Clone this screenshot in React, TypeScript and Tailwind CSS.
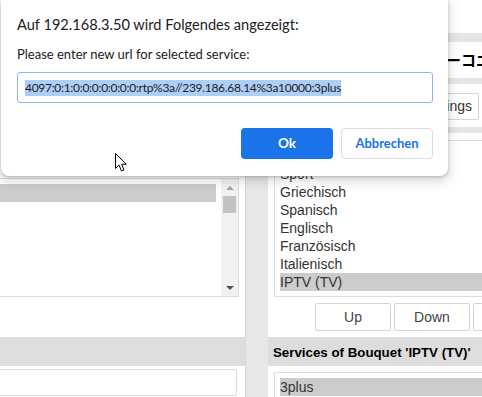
import React from "react";

const rightItems = ["Kinder", "Sport", "Griechisch", "Spanisch", "Englisch", "Französisch", "Italienisch", "IPTV (TV)"];

function Cursor() {
  return (
    <svg width="14" height="21" viewBox="0 0 14 21" className="absolute left-[114px] top-[152px]">
      <path
        d="M1.5 1.5 V16.5 L5 13 L7.5 19 L10 18 L7.6 12.2 H12.3 Z"
        fill="#ffffff"
        stroke="#000000"
        strokeWidth="1"
        strokeLinejoin="miter"
      />
    </svg>
  );
}

export default function App() {
  return (
    <div
      className="relative w-[482px] h-[397px] overflow-hidden bg-white"
      style={{ fontFamily: '"Liberation Sans", Arial, sans-serif' }}
    >
      {/* Page behind the dialog */}
      <div className="flex h-full w-[482px] items-stretch">
        {/* Left column */}
        <div className="w-[245px] shrink-0">
          <div className="h-[178px]" />
          <div className="flex h-[119px] w-[239px] border border-l-0 border-[#dcdcdc] bg-white">
            <div className="flex-1 pt-[5px] pr-[5px]">
              <div className="h-[18px] bg-[#cccccc]" />
            </div>
            <div className="flex w-[17px] flex-col bg-[#f1f1f1]">
              <div className="flex h-[17px] items-center justify-center">
                <div className="h-0 w-0 border-x-[4px] border-b-[4px] border-x-transparent border-b-[#a3a3a3]" />
              </div>
              <div className="mx-[2px] h-[17px] bg-[#c1c1c1]" />
              <div className="flex-1" />
              <div className="flex h-[17px] items-center justify-center">
                <div className="h-0 w-0 border-x-[4px] border-t-[4px] border-x-transparent border-t-[#505050]" />
              </div>
            </div>
          </div>
          <div className="h-[40px]" />
          <div className="h-[29px] bg-[#dddddd]" />
          <div className="h-[3px]" />
          <div className="h-[27px] w-[237px] rounded-[2px] border border-l-0 border-[#dcdcdc]" />
        </div>

        {/* Divider */}
        <div className="w-[23px] shrink-0 border-l border-[#d6d6d6] bg-[#e7e7e7]" />

        {/* Right column */}
        <div className="w-[214px] shrink-0">
          <div className="h-[33px]" />
          <div className="h-[9px] bg-[#e5e5e5]" />
          <div className="flex h-[36px] items-center pl-[178px]">
            <span
              className="whitespace-nowrap text-[15px] font-bold leading-[36px] text-black"
              style={{ fontFamily: '"Noto Sans CJK JP", sans-serif' }}
            >
              ーコエ
            </span>
          </div>
          <div className="h-[6px] bg-[#e5e5e5]" />
          <div className="flex h-[43px] items-start justify-end pt-[9px] pr-[3px]">
            <div className="flex h-[27px] items-center rounded-[2px] border border-[#d4d4d4] bg-white px-[6px] text-[14px] text-[#333333]">
              Settings
            </div>
          </div>
          <div className="h-[6px] bg-[#e5e5e5]" />
          <div className="h-[7px]" />
          <div className="ml-[6px] h-[157px] w-[208px] overflow-hidden rounded-l-[2px] border border-r-0 border-[#dcdcdc] pl-[5px] pt-[6px]">
            {rightItems.map((it) => (
              <div
                key={it}
                className={`h-[18px] whitespace-nowrap text-[14px] leading-[18px] text-[#333333] ${
                  it === "IPTV (TV)" ? "bg-[#cccccc]" : ""
                }`}
              >
                {it}
              </div>
            ))}
          </div>
          <div className="flex h-[40px] items-start gap-[3px] overflow-hidden pl-[47px] pt-[6px]">
            {["Up", "Down", "Del"].map((b) => (
              <div
                key={b}
                className="flex h-[28px] w-[76px] shrink-0 items-center justify-center rounded-[2px] border border-[#d4d4d4] bg-white text-[14px] text-[#444444]"
              >
                {b}
              </div>
            ))}
          </div>
          <div className="flex h-[29px] w-[214px] items-center bg-[#dddddd] pl-[5px] pt-[2px]">
            <span className="whitespace-nowrap text-[13.3px] font-bold text-black">Services of Bouquet 'IPTV (TV)'</span>
          </div>
          <div className="h-[6px]" />
          <div className="ml-[6px] h-[40px] w-[208px] border border-r-0 border-[#dcdcdc] pl-[5px] pt-[5px]">
            <div className="h-[18px] bg-[#cccccc] text-[14px] leading-[18px] text-[#333333]">3plus</div>
          </div>
        </div>
      </div>

      {/* Browser prompt dialog */}
      <div
        className="absolute left-[1px] top-0 flex h-[176px] w-[447px] flex-col rounded-b-[8px] bg-white pl-[16px] pr-[15px] shadow-[0_1px_3px_rgba(60,64,67,0.3),0_4px_8px_3px_rgba(60,64,67,0.15)]"
        style={{ fontFamily: 'Lato, "Noto Sans", sans-serif' }}
      >
        <div className="shrink-0 pt-[15px] text-[14.6px] leading-[20px] text-[#202124]">
          Auf 192.168.3.50 wird Folgendes angezeigt:
        </div>
        <div className="mt-[11px] shrink-0 text-[13px] leading-[16px] text-[#202124]">
          Please enter new url for selected service:
        </div>
        <div className="mt-[10px] flex h-[31px] shrink-0 items-center rounded-[3px] border border-[#8ab4f8] pl-[7px]">
          <span className="bg-[#accef7] text-[12px] leading-[16px] tracking-[-0.3px] text-[#202124]">
            4097:0:1:0:0:0:0:0:0:0:rtp%3a//239.186.68.14%3a10000:3plus
          </span>
        </div>
        <div className="mt-[25px] flex shrink-0 justify-end gap-[8px]">
          <div className="flex h-[31px] w-[92px] items-center justify-center rounded-[4px] bg-[#1a73e8] text-[13.5px] font-bold text-white">
            Ok
          </div>
          <div className="flex h-[31px] w-[92px] items-center justify-center rounded-[4px] border border-[#dadce0] bg-white text-[13px] font-bold text-[#1a73e8]">
            Abbrechen
          </div>
        </div>
      </div>

      <Cursor />
    </div>
  );
}
